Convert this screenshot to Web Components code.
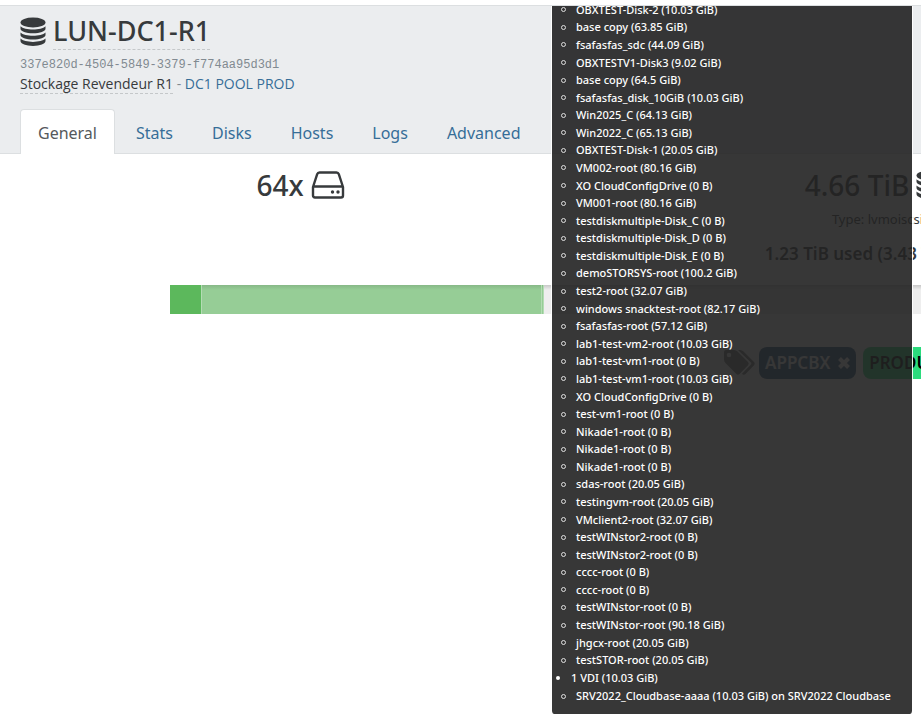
<!DOCTYPE html>
<html lang="en">
<head>
<meta charset="utf-8">
<title>LUN-DC1-R1</title>
<style>
    html, body {
        height: 100%;
    }

    body {
        margin: 0;
        overflow: hidden;
        background: #fff;
        color: #373a3c;
        font: 500 16px/24px "Noto Sans", "Open Sans", sans-serif;
    }
</style>
</head>
<body>
<sr-page>
    <sr-header
        slot="header"
        name="LUN-DC1-R1"
        uuid="337e820d-4504-5849-3379-f774aa95d3d1"
        description="Stockage Revendeur R1"
        pool="DC1 POOL PROD">
        <sr-tab active>General</sr-tab>
        <sr-tab>Stats</sr-tab>
        <sr-tab>Disks</sr-tab>
        <sr-tab>Hosts</sr-tab>
        <sr-tab>Logs</sr-tab>
        <sr-tab>Advanced</sr-tab>
    </sr-header>
    <sr-stat slot="stats" value="64x" icon="disk"></sr-stat>
    <sr-stat slot="stats" value="4.66 TiB" icon="database">
        <span slot="type">Type: lvmoiscsi</span>
        <span slot="usage">1.23 TiB used (3.43 TiB free)</span>
    </sr-stat>
    <sr-usage slot="usage"></sr-usage>
    <sr-tags slot="tags">
        <sr-tag>APPCBX</sr-tag>
        <sr-tag color="green">PRODUCTION</sr-tag>
    </sr-tags>
</sr-page>
<vdi-tooltip></vdi-tooltip>

<script>
const ICONS = {
    database: `
        <svg viewBox="0 0 26 30" width="26" height="30" preserveAspectRatio="xMinYMid meet" fill="currentColor" aria-hidden="true">
            <ellipse cx="13" cy="5.5" rx="12.5" ry="5"/>
            <path d="M.5 9.2c2.2 2.2 7 3.3 12.5 3.3s10.3-1.1 12.5-3.3v2.5c0 2.6-5.6 4.6-12.5 4.6S.5 14.3.5 11.7z"/>
            <path d="M.5 15.4c2.2 2.2 7 3.3 12.5 3.3s10.3-1.1 12.5-3.3v2.5c0 2.6-5.6 4.6-12.5 4.6S.5 20.5.5 17.9z"/>
            <path d="M.5 21.6c2.2 2.2 7 3.3 12.5 3.3s10.3-1.1 12.5-3.3v2.5c0 2.8-5.6 4.9-12.5 4.9S.5 26.9.5 24.1z"/>
        </svg>`,
    disk: `
        <svg viewBox="0 0 34 28" width="34" height="28" fill="none" stroke="currentColor" stroke-width="2.4" stroke-linejoin="round" aria-hidden="true">
            <path d="M2 16 6.2 3.2Q6.8 1.5 8.5 1.5H25.5Q27.2 1.5 27.8 3.2L32 16V24.5Q32 26.5 30 26.5H4Q2 26.5 2 24.5ZM2.5 15.5H31.5"/>
            <g fill="currentColor" stroke="none"><circle cx="21.5" cy="21" r="1.7"/><circle cx="27" cy="21" r="1.7"/></g>
        </svg>`,
    tags: `
        <svg viewBox="0 0 32 28" width="32" height="28" fill="currentColor" aria-hidden="true">
            <path fill-rule="evenodd" d="M1 3Q1 1 3 1H11Q13 1 14.5 2.5L25 13Q26.5 14.6 25 16.2L16.5 25Q15 26.3 13.4 25L2.7 14.2Q1 12.5 1 10.5ZM6 3.7A2.3 2.3 0 1 0 6 8.3 2.3 2.3 0 1 0 6 3.7Z"/>
            <path d="M15 1H17Q19 1 20.5 2.5L31 13Q32.3 14.6 31 16.2L22.5 25Q20.7 26.5 19 24.8L28 15.5Q28.8 14.6 28 13.6Z"/>
        </svg>`,
    remove: `
        <svg viewBox="0 0 12 12" width="12" height="12" stroke="currentColor" stroke-width="4" aria-hidden="true">
            <path d="M1.5 1.5l9 9M10.5 1.5l-9 9"/>
        </svg>`
};

const VDIS = [
    'OBXTEST-Disk-2 (10.03 GiB)',
    'base copy (63.85 GiB)',
    'fsafasfas_sdc (44.09 GiB)',
    'OBXTESTV1-Disk3 (9.02 GiB)',
    'base copy (64.5 GiB)',
    'fsafasfas_disk_10GiB (10.03 GiB)',
    'Win2025_C (64.13 GiB)',
    'Win2022_C (65.13 GiB)',
    'OBXTEST-Disk-1 (20.05 GiB)',
    'VM002-root (80.16 GiB)',
    'XO CloudConfigDrive (0 B)',
    'VM001-root (80.16 GiB)',
    'testdiskmultiple-Disk_C (0 B)',
    'testdiskmultiple-Disk_D (0 B)',
    'testdiskmultiple-Disk_E (0 B)',
    'demoSTORSYS-root (100.2 GiB)',
    'test2-root (32.07 GiB)',
    'windows snacktest-root (82.17 GiB)',
    'fsafasfas-root (57.12 GiB)',
    'lab1-test-vm2-root (10.03 GiB)',
    'lab1-test-vm1-root (0 B)',
    'lab1-test-vm1-root (10.03 GiB)',
    'XO CloudConfigDrive (0 B)',
    'test-vm1-root (0 B)',
    'Nikade1-root (0 B)',
    'Nikade1-root (0 B)',
    'Nikade1-root (0 B)',
    'sdas-root (20.05 GiB)',
    'testingvm-root (20.05 GiB)',
    'VMclient2-root (32.07 GiB)',
    'testWINstor2-root (0 B)',
    'testWINstor2-root (0 B)',
    'cccc-root (0 B)',
    'cccc-root (0 B)',
    'testWINstor-root (0 B)',
    'testWINstor-root (90.18 GiB)',
    'jhgcx-root (20.05 GiB)',
    'testSTOR-root (20.05 GiB)'
];

class SrPage extends HTMLElement {
    constructor() {
        super();
        this.attachShadow({ mode: 'open' });
        this.shadowRoot.innerHTML = `
            <style>
                :host {
                    display: block;
                    padding-top: 5px;
                }

                /* the panel keeps its two columns on narrow windows */
                main {
                    min-width: 1154px;
                    padding: 0 12px;
                }

                .stats {
                    display: grid;
                    grid-template-columns: 1fr 1fr;
                    min-height: 131px;
                }

                .usage {
                    padding: 0 158px;
                }

                .tags {
                    margin-top: 33px;
                    padding-left: 711px;
                }
            </style>
            <slot name="header"></slot>
            <main>
                <div class="stats"><slot name="stats"></slot></div>
                <div class="usage"><slot name="usage"></slot></div>
                <div class="tags"><slot name="tags"></slot></div>
            </main>
        `;
    }
}

class SrHeader extends HTMLElement {
    constructor() {
        super();
        this.attachShadow({ mode: 'open' });
    }

    connectedCallback() {
        this.shadowRoot.innerHTML = `
            <style>
                :host {
                    display: block;
                    padding: 7px 20px 0;
                    background: #ebedef;
                    border-top: 1px solid #dcdfe1;
                    border-bottom: 1px solid #dcdfe1;
                }

                h1 {
                    display: flex;
                    align-items: center;
                    gap: 7px;
                    margin: 0;
                    font-size: 27px;
                    font-weight: 500;
                    line-height: 36px;
                }

                .editable {
                    border-bottom: 1px dashed #c4c7c9;
                }

                .uuid {
                    margin: 5px 0 0;
                    color: #818a91;
                    font: 12px/20px "Liberation Mono", monospace;
                }

                .info {
                    margin: 0;
                    color: #818a91;
                    font: 400 14px/18px "Open Sans", sans-serif;
                }

                .info .editable {
                    display: inline-block;
                    color: #373a3c;
                }

                a {
                    color: #366e98;
                    text-decoration: none;
                }

                nav {
                    display: flex;
                    gap: 3px;
                    margin-top: 15px;
                    margin-bottom: -1px;
                }
            </style>
            <h1>${ICONS.database}<span class="editable">${this.getAttribute('name')}</span></h1>
            <p class="uuid">${this.getAttribute('uuid')}</p>
            <p class="info">
                <span class="editable">${this.getAttribute('description')}</span>
                - <a href="#pool">${this.getAttribute('pool')}</a>
            </p>
            <nav><slot></slot></nav>
        `;
    }
}

class SrTab extends HTMLElement {
    constructor() {
        super();
        this.attachShadow({ mode: 'open' });
        this.shadowRoot.innerHTML = `
            <style>
                :host {
                    display: block;
                }

                a {
                    display: block;
                    padding: 11px 17px 9px;
                    border: 1px solid transparent;
                    border-bottom: 0;
                    border-radius: 4px 4px 0 0;
                    color: #366e98;
                    font-weight: 400;
                    text-decoration: none;
                }

                :host([active]) a {
                    background: #fff;
                    border-color: #dcdfe1;
                    color: #55595c;
                }
            </style>
            <a href="#tab"><slot></slot></a>
        `;
    }
}

class SrStat extends HTMLElement {
    constructor() {
        super();
        this.attachShadow({ mode: 'open' });
    }

    connectedCallback() {
        this.shadowRoot.innerHTML = `
            <style>
                :host {
                    display: block;
                    padding-top: 13px;
                    text-align: center;
                }

                h2 {
                    display: flex;
                    align-items: center;
                    justify-content: center;
                    gap: 7px;
                    margin: 0;
                    font-size: 28px;
                    font-weight: 500;
                    line-height: 36px;
                }

                /* all icons take the same width */
                h2 svg {
                    width: 34px;
                }

                .type {
                    margin: 4px 0 0;
                    font-size: 13px;
                    font-weight: 400;
                }

                .usage {
                    margin: 11px 0 0;
                    font-size: 17px;
                    font-weight: 600;
                }
            </style>
            <h2>${this.getAttribute('value')} ${ICONS[this.getAttribute('icon')]}</h2>
            <p class="type"><slot name="type"></slot></p>
            <p class="usage"><slot name="usage"></slot></p>
        `;
    }
}

class SrUsage extends HTMLElement {
    constructor() {
        super();
        this.attachShadow({ mode: 'open' });
        this.shadowRoot.innerHTML = `
            <style>
                :host {
                    display: flex;
                    height: 29px;
                    background: linear-gradient(rgba(0, 0, 0, .16), transparent 5px) #eee;
                }

                i {
                    background: linear-gradient(rgba(0, 0, 0, .1), transparent 5px) #96cd96;
                    border-right: 1px solid #b4dcb4;
                }

                .base {
                    width: 31px;
                    background: #5cb85c;
                }

                .vdis {
                    width: 339px;
                }

                .other {
                    width: 1px;
                }
            </style>
            <i class="base"></i><i class="vdis"></i><i class="other"></i>
        `;
    }
}

class SrTags extends HTMLElement {
    constructor() {
        super();
        this.attachShadow({ mode: 'open' });
        this.shadowRoot.innerHTML = `
            <style>
                :host {
                    display: flex;
                    align-items: center;
                    gap: 7px;
                }

                svg {
                    margin-right: -3px;
                    color: #777;
                }
            </style>
            ${ICONS.tags}
            <slot></slot>
        `;
    }
}

class SrTag extends HTMLElement {
    constructor() {
        super();
        this.attachShadow({ mode: 'open' });
        this.shadowRoot.innerHTML = `
            <style>
                :host {
                    display: flex;
                    align-items: center;
                    gap: 8px;
                    height: 32px;
                    padding: 0 6px;
                    border-radius: 8px;
                    background: #2c5a80;
                    color: #fff;
                    font-size: 17px;
                    font-weight: 600;
                }

                :host([color="green"]) {
                    background: #2bdb7d;
                    color: #000;
                }

                button {
                    display: flex;
                    padding: 0;
                    border: 0;
                    background: none;
                    color: inherit;
                }
            </style>
            <slot></slot>
            <button type="button" aria-label="Remove tag">${ICONS.remove}</button>
        `;
    }
}

class VdiTooltip extends HTMLElement {
    constructor() {
        super();
        this.attachShadow({ mode: 'open' });
        this.shadowRoot.innerHTML = `
            <style>
                :host {
                    position: absolute;
                    top: 6px;
                    right: 8px;
                    bottom: 7px;
                    display: flex;
                    flex-direction: column;
                    box-sizing: border-box;
                    width: 362px;
                    padding-bottom: 9px;
                    overflow: hidden;
                    border: solid #fff;
                    border-width: 0 1px;
                    border-radius: 0 0 3px 3px;
                    background: #222;
                    background-clip: padding-box;
                    color: #fff;
                    font-size: 11px;
                    line-height: 18px;
                    opacity: .9;
                }

                ul {
                    margin: 0;
                    padding: 0 0 0 24px;
                    list-style: none;
                }

                li {
                    display: flex;
                    align-items: center;
                }

                li::before {
                    content: "";
                    box-sizing: border-box;
                    width: 5px;
                    height: 5px;
                    margin: 0 10px 0 -15px;
                    border: 1px solid #ddd;
                    border-radius: 50%;
                }

                /* starts above the visible part, rows share the height */
                .vdis {
                    flex: 1;
                    display: grid;
                    grid-auto-rows: 1fr;
                    min-height: 0;
                    margin-top: -5px;
                }

                .vdis li {
                    min-height: 0;
                    height: 100%;
                }

                .group {
                    padding-left: 19px;
                }

                .group li::before {
                    height: 4px;
                    width: 4px;
                    margin: 0 11px 0 -15px;
                    background: #fff;
                    border: 0;
                }
            </style>
            <ul class="vdis"></ul>
            <ul class="group"><li>1 VDI (10.03 GiB)</li></ul>
            <ul><li>SRV2022_Cloudbase-aaaa (10.03 GiB) on SRV2022 Cloudbase</li></ul>
        `;
        const list = this.shadowRoot.querySelector('.vdis');
        for (const vdi of VDIS) {
            const item = document.createElement('li');
            item.textContent = vdi;
            list.append(item);
        }
    }
}

customElements.define('sr-page', SrPage);
customElements.define('sr-header', SrHeader);
customElements.define('sr-tab', SrTab);
customElements.define('sr-stat', SrStat);
customElements.define('sr-usage', SrUsage);
customElements.define('sr-tags', SrTags);
customElements.define('sr-tag', SrTag);
customElements.define('vdi-tooltip', VdiTooltip);
</script>
</body>
</html>
